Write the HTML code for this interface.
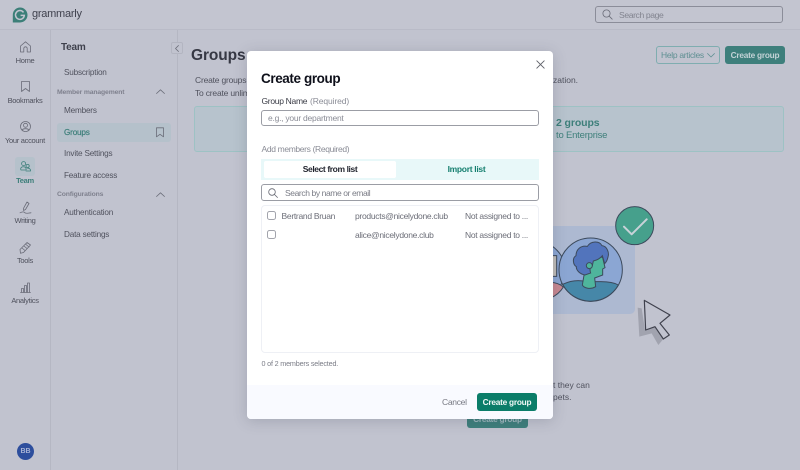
<!DOCTYPE html>
<html><head><meta charset="utf-8"><style>
*{box-sizing:border-box}
html,body{margin:0;padding:0}
body{width:800px;height:470px;overflow:hidden;position:relative;background:#c1c3cf;font-family:"Liberation Sans",sans-serif;color:#4d4f5c}
.a{position:absolute;white-space:nowrap}
.nav{font-size:7.5px;color:#4f515d;width:50px;text-align:center;left:0;letter-spacing:-.3px}
.sub{font-size:8.2px;color:#50525e;left:64px;letter-spacing:-.2px}
.hd{font-size:6.8px;font-weight:bold;color:#7f818e;left:57px;letter-spacing:-.15px}
.t{font-size:8.5px;color:#6c6e78;letter-spacing:-.29px}
svg{position:absolute;overflow:visible}
.i{fill:none;stroke:#6a6c78;stroke-width:.8;stroke-linecap:round;stroke-linejoin:round}
</style></head><body>
<!-- top bar -->
<div class="a" style="left:0;top:0;width:800px;height:30px;background:#c3c5d0;border-bottom:1px solid #b9bbc7"></div>
<svg style="left:12px;top:7px" width="16" height="16" viewBox="0 0 16 16"><path d="M8 .5a7.500 7.500 0 1 1 0 15H.8V8A7.300 7.300 0 0 1 8 .5z" fill="#3c7f78"/><path d="M11.500 5.400A4.400 4.400 0 1 0 12.300 8.400H8.600" fill="none" stroke="#c3c5d0" stroke-width="1.500"/></svg>
<div class="a" style="left:32px;top:8px;font-size:11px;color:#3f414d;letter-spacing:-.25px">grammarly</div>
<div class="a" style="left:595px;top:6px;width:188px;height:17px;border:1px solid #8b8d99;border-radius:3px"></div>
<svg class="i" style="left:602px;top:9px" width="11" height="11" viewBox="0 0 11 11"><circle cx="4.500" cy="4.500" r="3.600"/><path d="M7.200 7.200l3 3"/></svg>
<div class="a" style="left:619px;top:10px;font-size:8.600px;color:#82848f;letter-spacing:-.4px">Search page</div>
<!-- rail lines -->
<div class="a" style="left:50px;top:30px;width:1px;height:440px;background:#b5b7c3"></div>
<div class="a" style="left:177px;top:30px;width:1px;height:440px;background:#b5b7c3"></div>
<!-- rail icons -->
<svg class="i" style="left:19.500px;top:41px" width="11" height="12" viewBox="0 0 11 12"><path d="M.5 11V5L5.500.8 10.500 5v6H7.200V7.500a1.700 1.700 0 0 0-3.400 0V11z"/></svg>
<div class="a nav" style="top:56px">Home</div>
<svg class="i" style="left:20.500px;top:81px" width="9" height="11" viewBox="0 0 9 11"><path d="M.5.500h8v10L4.500 7.500l-4 3z"/></svg>
<div class="a nav" style="top:96px">Bookmarks</div>
<svg class="i" style="left:20px;top:121px" width="11" height="11" viewBox="0 0 11 11"><circle cx="5.500" cy="5.500" r="5"/><circle cx="5.500" cy="4.300" r="2"/><path d="M2 9.200c1-2 6-2 7 0"/></svg>
<div class="a nav" style="top:136px">Your account</div>
<div class="a" style="left:15px;top:157px;width:20px;height:19px;border-radius:3px;background:#b5c1cb"></div>
<svg class="i" style="left:20px;top:161px;stroke:#3d7f7a" width="11" height="11" viewBox="0 0 11 11"><circle cx="3.600" cy="2.600" r="2"/><path d="M.6 8c.4-3 5-3 5.600 0l-.2 1H1z"/><circle cx="7.600" cy="5" r="1.600"/><path d="M6 10h4.600c.2-2.200-1.800-3-3-2.800"/></svg>
<div class="a nav" style="top:175.500px;color:#3d7f7a;font-weight:bold">Team</div>
<svg class="i" style="left:19px;top:201px" width="13" height="13" viewBox="0 0 13 13"><path d="M8 1l2 1.500-3.500 6-2 1 .1-2.300zM1 11.800c3-1.500 4-1 5 0s3 .2 6 0"/></svg>
<div class="a nav" style="top:215.500px">Writing</div>
<svg class="i" style="left:19px;top:241px" width="13" height="13" viewBox="0 0 13 13"><path d="M1 8.500L8 1.500l3.500 2.500-7 7.500-3 .8zM3 7l3 2.500M5 5l3 2.500M7 3.500l3 2.500"/></svg>
<div class="a nav" style="top:255.500px">Tools</div>
<svg class="i" style="left:20px;top:282px" width="11" height="11" viewBox="0 0 11 11"><path d="M.5 10.500h10M1.500 10V6.500h2V10M4.500 10V3.500h2V10M7.500 10V1h2v9"/></svg>
<div class="a nav" style="top:295.500px">Analytics</div>
<div class="a" style="left:17px;top:443px;width:17px;height:17px;border-radius:50%;background:#2d4e9d;color:#a8b3d4;font-size:7px;line-height:17px;text-align:center;font-weight:bold">BB</div>
<!-- secondary nav -->
<div class="a" style="left:61px;top:42px;font-size:10px;font-weight:bold;color:#3f414d;letter-spacing:-.2px">Team</div>
<div class="a sub" style="top:68px">Subscription</div>
<div class="a hd" style="top:88.500px">Member management</div>
<svg class="i" style="left:156px;top:89px" width="9" height="5" viewBox="0 0 9 5"><path d="M.5 4.500L4.500.8l4 3.700"/></svg>
<div class="a sub" style="top:106px">Members</div>
<div class="a" style="left:57px;top:123px;width:114px;height:19px;border-radius:3px;background:#b5c1cb"></div>
<div class="a sub" style="top:127.500px;color:#3d7f7a;-webkit-text-stroke:.2px #3d7f7a">Groups</div>
<svg class="i" style="left:156px;top:127px" width="8" height="11" viewBox="0 0 8 11"><path d="M.5.800h7v9L4 7.300.5 9.800z"/></svg>
<div class="a sub" style="top:149px">Invite Settings</div>
<div class="a sub" style="top:171px">Feature access</div>
<div class="a hd" style="top:190.500px">Configurations</div>
<svg class="i" style="left:156px;top:192px" width="9" height="5" viewBox="0 0 9 5"><path d="M.5 4.500L4.500.8l4 3.700"/></svg>
<div class="a sub" style="top:208px">Authentication</div>
<div class="a sub" style="top:230px">Data settings</div>
<div class="a" style="left:171px;top:42px;width:12px;height:12px;border:1px solid #b3b5c1;border-radius:2px;background:#c1c3cf"></div>
<svg class="i" style="left:175px;top:45px" width="4" height="7" viewBox="0 0 4 7"><path d="M3.500.5L.5 3.500l3 3"/></svg>
<!-- page content -->
<div class="a" style="left:191px;top:46.500px;font-size:15.500px;font-weight:bold;color:#363844;letter-spacing:-.1px">Groups</div>
<div class="a" style="left:195px;top:75px;font-size:8.500px;color:#50525e;letter-spacing:-.2px">Create groups</div>
<div class="a" style="left:195px;top:87.500px;font-size:8.500px;color:#50525e;letter-spacing:-.2px">To create unlim</div>
<div class="a" style="left:553px;top:75px;font-size:8.500px;color:#50525e">zation.</div>
<div class="a" style="left:194px;top:106px;width:590px;height:46px;background:#b7c3cd;border:1px solid #9dc2c4;border-radius:3px"></div>
<div class="a" style="left:556px;top:117px;font-size:10.500px;font-weight:bold;color:#3d7f7a;letter-spacing:-.1px">2 groups</div>
<div class="a" style="left:556px;top:130px;font-size:9.500px;color:#3d7f7a;letter-spacing:-.2px">to Enterprise</div>
<div class="a" style="left:656px;top:46px;width:64px;height:18px;border:1px solid #7fadb0;border-radius:3px"></div>
<div class="a" style="left:661px;top:50px;font-size:8.500px;color:#5e8f92;letter-spacing:-.3px">Help articles</div>
<svg class="i" style="left:707px;top:53px;stroke:#5e8f92" width="8" height="5" viewBox="0 0 8 5"><path d="M.5.500L4 4 7.500.500"/></svg>
<div class="a" style="left:725px;top:46px;width:60px;height:18px;border-radius:3px;background:#3e7f7c;color:#c3d2d6;font-size:8.300px;font-weight:bold;line-height:18px;text-align:center;letter-spacing:-.25px">Create group</div>
<!-- illustration -->
<svg style="left:550px;top:195px" width="130" height="160" viewBox="0 0 390 480">
<path d="M0 93H240a15 15 0 0 1 15 15V342a15 15 0 0 1-15 15H0z" fill="#adb9d1"/>
<circle cx="254" cy="92" r="57" fill="#46a08c" stroke="#3c4a5c" stroke-width="3"/>
<path d="M222 95l23 23 45-45" fill="none" stroke="#c8d2d8" stroke-width="6" stroke-linecap="round" stroke-linejoin="round"/>
<circle cx="-40" cy="225" r="85" fill="#8ba6d3" stroke="#3c4a5c" stroke-width="3"/>
<path d="M0 182h20v62H0z" fill="#c0bdb8" stroke="#3c4a5c" stroke-width="3"/>
<path d="M0 262c15 0 30 5 40 14-8 14-22 26-40 34z" fill="#c88892" stroke="#3c4a5c" stroke-width="3"/>
<circle cx="122" cy="224" r="95" fill="#8ba6d3" stroke="#3c4a5c" stroke-width="3"/>
<path d="M38 268c30-14 55-12 70-8h45c20 0 38 2 52 10a95 95 0 0 1-167-2z" fill="#4687a8" stroke="#3c4a5c" stroke-width="3"/>
<path d="M103 235l-6 35c5 10 25 14 40 5l-3-26 24-9v-18l7-4-7-30-22-10-30 30z" fill="#4fb59c" stroke="#3c4a5c" stroke-width="3"/>
<path d="M105 240c-15-3-27-14-26-25-10-6-13-26-1-33 0-18 14-32 34-28 10-16 36-18 44-2 16 2 22 22 18 34-2 10-6 16-10 20-3-10-5-18-7-24-8 10-18 14-27 16l-3 14c-8 2-8 14-5 22z" fill="#5274bc" stroke="#3c4a5c" stroke-width="3"/>
<circle cx="118" cy="212" r="9" fill="#4fb59c" stroke="#3c4a5c" stroke-width="3"/>
<path d="M263 338l12 2 10 65 30-10 25 37-15 18-20-35-37 10z" fill="#a1a3af"/>
<path d="M283 316l77 44-30 25 28 35-18 12-25-37-28 10z" fill="#c1c3cf" stroke="#3f414d" stroke-width="3.500" stroke-linejoin="round"/>
</svg>
<div class="a" style="left:553px;top:380px;font-size:8.500px;color:#50525e">t they can</div>
<div class="a" style="left:553px;top:392px;font-size:8.500px;color:#50525e">pets.</div>
<div class="a" style="left:467px;top:412px;width:61px;height:16px;border-radius:3px;background:#3e7f7c;color:#9fb9bf;font-size:8.300px;font-weight:bold;line-height:15px;text-align:center;letter-spacing:-.25px">Create group</div>
<!-- modal -->
<div class="a" style="left:247px;top:51px;width:306px;height:368px;background:#fff;border-radius:4px;box-shadow:0 2px 14px rgba(60,62,80,.22);overflow:hidden">
  <div class="a" style="left:0;top:334px;width:306px;height:34px;background:#f9faff"></div>
</div>
<svg class="i" style="left:536px;top:60px;stroke:#5f6169;stroke-width:.9" width="9" height="9" viewBox="0 0 9 9"><path d="M.8.800l7.400 7.400M8.200.800L.8 8.200"/></svg>
<div class="a" style="left:261px;top:70.500px;font-size:13.500px;font-weight:bold;color:#0e101a;letter-spacing:-.4px">Create group</div>
<div class="a" style="left:261.500px;top:96px;font-size:8.500px;color:#3a3c46;letter-spacing:-.3px">Group Name</div>
<div class="a" style="left:310px;top:96px;font-size:8.500px;color:#8a8c96;letter-spacing:-.1px">(Required)</div>
<div class="a" style="left:261px;top:110px;width:278px;height:16px;border:1px solid #9b9da5;border-radius:3px"></div>
<div class="a" style="left:268px;top:113px;font-size:8.500px;color:#8a8c96;letter-spacing:-.25px">e.g., your department</div>
<div class="a" style="left:261.500px;top:144px;font-size:8.500px;color:#8a8c96;letter-spacing:-.35px">Add members (Required)</div>
<div class="a" style="left:261px;top:159px;width:278px;height:21px;background:#e8f8f9"></div>
<div class="a" style="left:264px;top:161px;width:132px;height:17px;background:#fff;border-radius:2px;text-align:center;font-size:8.500px;font-weight:bold;color:#22242e;line-height:17px;letter-spacing:-.4px">Select from list</div>
<div class="a" style="left:396px;top:161px;width:141px;height:17px;text-align:center;font-size:8.500px;font-weight:bold;color:#157f6f;line-height:17px;letter-spacing:-.3px">Import list</div>
<div class="a" style="left:261px;top:184px;width:278px;height:17px;border:1px solid #9b9da5;border-radius:3px"></div>
<svg class="i" style="left:268px;top:188px;stroke:#666872" width="10" height="10" viewBox="0 0 10 10"><circle cx="4" cy="4" r="3.300"/><path d="M6.500 6.500l3 3"/></svg>
<div class="a" style="left:285px;top:187.500px;font-size:8.500px;color:#7a7c86;letter-spacing:-.4px">Search by name or email</div>
<div class="a" style="left:261px;top:205px;width:278px;height:148px;border:1px solid #eef0f5;border-radius:4px"></div>
<div class="a" style="left:267px;top:211px;width:9px;height:9px;border:1px solid #a2a4ac;border-radius:2.500px"></div>
<div class="a t" style="left:281.500px;top:210.500px">Bertrand Bruan</div>
<div class="a t" style="left:355px;top:210.500px">products@nicelydone.club</div>
<div class="a t" style="left:465px;top:210.500px">Not assigned to ...</div>
<div class="a" style="left:267px;top:230px;width:9px;height:9px;border:1px solid #a2a4ac;border-radius:2.500px"></div>
<div class="a t" style="left:355px;top:229.500px">alice@nicelydone.club</div>
<div class="a t" style="left:465px;top:229.500px">Not assigned to ...</div>
<div class="a" style="left:261.500px;top:359px;font-size:7.200px;color:#7a7c86;letter-spacing:-.17px">0 of 2 members selected.</div>
<div class="a" style="left:442px;top:397px;font-size:8.500px;color:#777983;letter-spacing:-.3px">Cancel</div>
<div class="a" style="left:477px;top:393px;width:60px;height:18px;border-radius:3px;background:#0b7d69;color:#f0f8f6;font-size:8.300px;font-weight:bold;line-height:18px;text-align:center;letter-spacing:-.25px">Create group</div>
</body></html>
